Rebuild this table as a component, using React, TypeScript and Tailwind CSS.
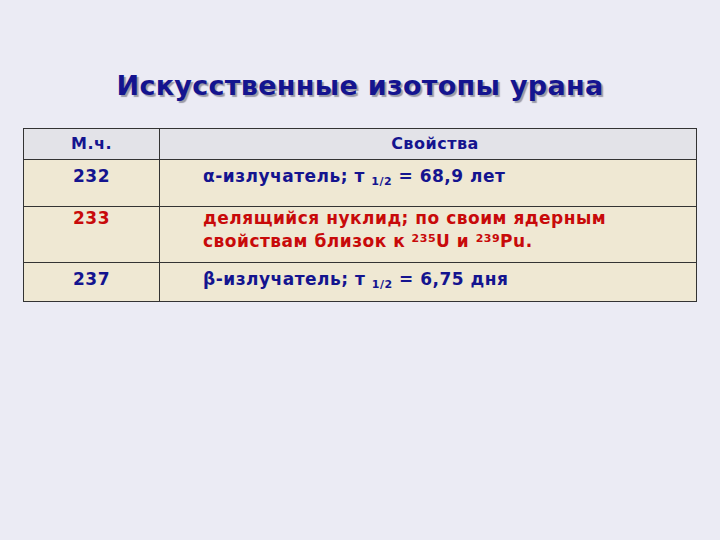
export default function App() {
  const font = { fontFamily: '"DejaVu Sans", "Noto Sans", sans-serif' };

  return (
    <div className="w-[720px] h-[540px] bg-[#ebebf4] overflow-hidden" style={font}>
      <h1 className="pt-[66px] text-center text-[27px] leading-[40px] font-bold text-[#14148f] tracking-[0.3px] [text-shadow:2px_2px_1px_#9a9aa8]">
        Искусственные изотопы урана
      </h1>

      <div className="mx-[23px] mt-[22px] border border-[#333] grid grid-cols-[136px_1fr] font-bold text-[17px] tracking-[0.5px]">
        {/* header */}
        <div className="h-[31px] bg-[#e3e3e8] border-r border-b border-[#333] text-center text-[#14148f] text-[16px] leading-[29px]">
          М.ч.
        </div>
        <div className="h-[31px] bg-[#e3e3e8] border-b border-[#333] text-center text-[#14148f] text-[16px] leading-[29px] pl-[14px]">
          Свойства
        </div>

        {/* 232 */}
        <div className="h-[47px] bg-[#efe8d3] border-r border-b border-[#333] text-center text-[#14148f] leading-[32px]">
          232
        </div>
        <div className="h-[47px] bg-[#efe8d3] border-b border-[#333] pl-[43px] text-[#14148f] leading-[32px]">
          α-излучатель; т <sub className="text-[11px]">1/2</sub> = 68,9 лет
        </div>

        {/* 233 */}
        <div className="h-[56px] bg-[#efe8d3] border-r border-b border-[#333] text-center text-[#c80a0a] leading-[22px]">
          233
        </div>
        <div className="h-[56px] bg-[#efe8d3] border-b border-[#333] pl-[43px] text-[#c80a0a] leading-[23px]">
          делящийся нуклид; по своим ядерным
          <br />
          свойствам близок к <sup className="text-[11px]">235</sup>U и <sup className="text-[11px]">239</sup>Pu.
        </div>

        {/* 237 */}
        <div className="h-[38px] bg-[#efe8d3] border-r border-[#333] text-center text-[#14148f] leading-[32px]">
          237
        </div>
        <div className="h-[38px] bg-[#efe8d3] pl-[43px] text-[#14148f] leading-[32px]">
          β-излучатель; т <sub className="text-[11px]">1/2</sub> = 6,75 дня
        </div>
      </div>
    </div>
  );
}
